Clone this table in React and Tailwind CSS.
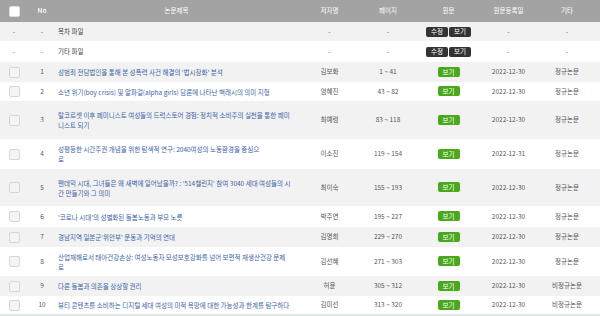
import React from 'react';

const rows = [
  { no: 1, title: '성범죄 전담법인을 통해 본 성폭력 사건 해결의 ‘법시장화’ 분석', author: '김보화', pages: '1 ~ 41', date: '2022-12-30', kind: '정규논문', h: 'h-[20px]' },
  { no: 2, title: '소년 위기(boy crisis) 및 알파걸(alpha girls) 담론에 나타난 백래시의 의미 지형', author: '엄혜진', pages: '43 ~ 82', date: '2022-12-30', kind: '정규논문', h: 'h-[19px]' },
  { no: 3, title: '탈코르셋 이후 페미니스트 여성들의 드럭스토어 경험: 정치적 소비주의 실천을 통한 페미니스트 되기', author: '최예령', pages: '83 ~ 118', date: '2022-12-30', kind: '정규논문', h: 'h-[38px]' },
  { no: 4, title: ['성평등한 시간주권 개념을 위한 탐색적 연구: 2040여성의 노동환경을 중심으', '로'], author: '이소진', pages: '119 ~ 154', date: '2022-12-31', kind: '정규논문', h: 'h-[30px]' },
  { no: 5, title: '팬데믹 시대, 그녀들은 왜 새벽에 일어났을까? : ‘514챌린지’ 참여 3040 세대 여성들의 시간 만들기와 그 의미', author: '최이숙', pages: '155 ~ 193', date: '2022-12-30', kind: '정규논문', h: 'h-[37px]' },
  { no: 6, title: '‘코로나 시대’의 성별화된 돌봄노동과 부모 노릇', author: '박주연', pages: '195 ~ 227', date: '2022-12-30', kind: '정규논문', h: 'h-[21px]' },
  { no: 7, title: '경남지역 일본군‘위안부’ 운동과 기억의 연대', author: '김명희', pages: '229 ~ 270', date: '2022-12-30', kind: '정규논문', h: 'h-[20px]' },
  { no: 8, title: '산업재해로서 태아건강손상: 여성노동자 모성보호강화를 넘어 보편적 재생산건강 문제로', author: '김선혜', pages: '271 ~ 303', date: '2022-12-30', kind: '정규논문', h: 'h-[29px]' },
  { no: 9, title: '다른 돌봄과 의존을 상상할 권리', author: '허윤', pages: '305 ~ 312', date: '2022-12-30', kind: '비정규논문', h: 'h-[20px]' },
  { no: 10, title: '뷰티 콘텐츠를 소비하는 디지털 세대 여성의 미적 욕망에 대한 가능성과 한계를 탐구하다', author: '김미선', pages: '313 ~ 320', date: '2022-12-30', kind: '비정규논문', h: 'h-[19px]' },
];

function Check({ head }) {
  return (
    <span
      className={`inline-block w-[11px] h-[11px] rounded-[2px] border align-middle ${
        head ? 'bg-white border-[#e0e0e0]' : 'bg-[#f4f4f4] border-[#d6d6d6]'
      }`}
    />
  );
}

function DarkBtn({ children }) {
  return (
    <span className="inline-flex items-center justify-center w-[22px] h-[10px] rounded-[2px] bg-[#333333] text-white text-[6.5px] leading-none">
      {children}
    </span>
  );
}

export default function App() {
  return (
    <div className="w-[600px] h-[316px] bg-white overflow-hidden font-['Noto_Sans_CJK_KR',sans-serif] text-[6.5px] text-[#555]">
      <table className="w-[600px] table-fixed border-collapse border-b-2 border-[#dfe6e6]">
        <colgroup>
          <col className="w-[28px]" />
          <col className="w-[28px]" />
          <col className="w-[241px]" />
          <col className="w-[65px]" />
          <col className="w-[52px]" />
          <col className="w-[69px]" />
          <col className="w-[51px]" />
          <col className="w-[66px]" />
        </colgroup>
        <thead>
          <tr className="h-[22px] bg-[#a3a3a3] text-white">
            <th className="font-normal text-center"><Check head /></th>
            <th className="font-medium text-center">No</th>
            <th className="font-normal text-center">논문제목</th>
            <th className="font-normal text-center">저자명</th>
            <th className="font-normal text-center">페이지</th>
            <th className="font-normal text-center">원문</th>
            <th className="font-normal text-center">원문등록일</th>
            <th className="font-normal text-center">기타</th>
          </tr>
        </thead>
        <tbody>
          {['목차 파일', '기타 파일'].map((t, i) => (
            <tr key={t} className={i === 0 ? 'h-[19px] bg-[#f2f2f2]' : 'h-[21px] bg-white'}>
              <td className="text-center">-</td>
              <td className="text-center">-</td>
              <td className="pl-[2px] text-[#444]">{t}</td>
              <td className="text-center">-</td>
              <td className="text-center">-</td>
              <td className="text-center">
                <div className="flex justify-center gap-[1px]">
                  <DarkBtn>수정</DarkBtn>
                  <DarkBtn>보기</DarkBtn>
                </div>
              </td>
              <td className="text-center">-</td>
              <td className="text-center">-</td>
            </tr>
          ))}
          {rows.map((r, i) => (
            <tr key={r.no} className={`${r.h} ${i % 2 === 0 ? 'bg-[#f2f2f2]' : 'bg-white'}`}>
              <td className="text-center"><Check /></td>
              <td className="text-center">{r.no}</td>
              <td className="pl-[2px] pr-[6px] leading-[10px] text-[#3b62a6]">
                {Array.isArray(r.title) ? (
                  <>
                    {r.title[0]}
                    <br />
                    {r.title[1]}
                  </>
                ) : (
                  r.title
                )}
              </td>
              <td className="text-center">{r.author}</td>
              <td className="text-center">{r.pages}</td>
              <td className="text-center">
                <span className="inline-flex items-center justify-center w-[22px] h-[10px] rounded-[2px] bg-[#4aa81c] text-white text-[6.5px] leading-none">
                  보기
                </span>
              </td>
              <td className="text-center">{r.date}</td>
              <td className="text-center">{r.kind}</td>
            </tr>
          ))}
        </tbody>
      </table>
    </div>
  );
}
